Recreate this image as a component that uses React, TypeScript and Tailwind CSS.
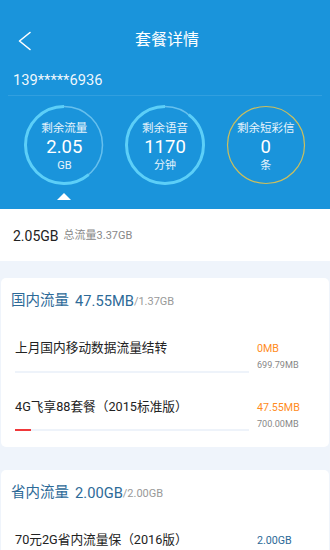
const font = { fontFamily: 'Roboto, "Noto Sans CJK SC", sans-serif' };

type Ring = {
    label: string;
    value: string;
    unit: string;
    start: number; // degrees from top, where the remaining arc begins
    sweep: number;
    color: string;
    track: string;
    trackWidth: number;
};

const rings: Ring[] = [
    { label: '剩余流量', value: '2.05', unit: 'GB', start: 140, sweep: 220, color: '#5ccff8', track: '#66c0ee', trackWidth: 1.5 },
    { label: '剩余语音', value: '1170', unit: '分钟', start: 38, sweep: 322, color: '#5ccff8', track: '#66c0ee', trackWidth: 1.5 },
    { label: '剩余短彩信', value: '0', unit: '条', start: 0, sweep: 0, color: '#5ccff8', track: '#cdbf5c', trackWidth: 1.2 },
];

function RingCircle({ ring }: { ring: Ring }) {
    const r = 38.5;
    const c = 2 * Math.PI * r;
    const arcLen = (ring.sweep / 360) * c;
    const startLen = (ring.start / 360) * c;

    return (
        <div className="relative w-[80px] h-[80px]">
            <svg width="80" height="80" viewBox="0 0 80 80" className="absolute inset-0">
                <circle cx="40" cy="40" r={r} fill="none" stroke={ring.track} strokeWidth={ring.trackWidth} />
                {ring.sweep > 0 && (
                    <circle
                        cx="40"
                        cy="40"
                        r={r}
                        fill="none"
                        stroke={ring.color}
                        strokeWidth="3"
                        strokeDasharray={`${arcLen} ${c}`}
                        strokeDashoffset={-startLen}
                        transform="rotate(-90 40 40)"
                    />
                )}
            </svg>
            <div className="absolute inset-0 flex flex-col items-center justify-center pt-[3px] text-white">
                <span className="text-[11.5px] leading-[14px] text-white/90">{ring.label}</span>
                <span className="text-[18.5px] leading-[24px]">{ring.value}</span>
                <span className="text-[11px] leading-[14px] text-white/90">{ring.unit}</span>
            </div>
        </div>
    );
}

type Item = {
    name: string;
    used: string;
    total?: string;
    usedColor: string;
    percent: number;
};

function ItemRow({ item }: { item: Item }) {
    return (
        <div className="flex pt-[13px] pl-[14px] pr-[10px] h-[58.5px]">
            <div className="flex-1 flex flex-col">
                <span className="text-[12.7px] leading-[22px] text-[#222]">{item.name}</span>
                {item.total && (
                    <div className="mt-[11.5px] h-[2px] bg-[#eef3fa] flex">
                        <div className="h-full bg-[#f0383a]" style={{ width: `${item.percent}%` }} />
                    </div>
                )}
            </div>
            <div className="w-[62px] ml-[8px] flex flex-col pt-[4px]">
                <span className="text-[10.7px] leading-[16px]" style={{ color: item.usedColor }}>
                    {item.used}
                </span>
                {item.total && <span className="text-[9.1px] leading-[16px] text-[#888]">{item.total}</span>}
            </div>
        </div>
    );
}

function UsageCard({ title, used, total, items }: { title: string; used: string; total: string; items: Item[] }) {
    return (
        <div className="mx-px bg-white rounded-[5px] pb-[6px]">
            <div className="h-[46px] flex items-center pl-[10px] text-[#2d6a98]">
                <span className="text-[14.5px]">{title}</span>
                <span className="text-[14.7px] ml-[6px]">{used}</span>
                <span className="text-[11px] text-[#999] mt-[2px]">/{total}</span>
            </div>
            {items.map((item) => (
                <ItemRow key={item.name} item={item} />
            ))}
        </div>
    );
}

export default function App() {
    return (
        <div className="w-[330px] h-[550px] bg-[#eff4fb] overflow-hidden" style={font}>
            <div className="bg-[#1a94db] pt-5 pb-[9px]">
                <div className="relative h-10 flex items-center justify-center">
                    {/* back arrow */}
                    <svg width="14" height="20" viewBox="0 0 14 20" className="absolute left-[18px] top-[11px]">
                        <polyline points="12,1.5 1.5,10 12,18.5" fill="none" stroke="white" strokeWidth="1.6" strokeLinecap="round" strokeLinejoin="round" />
                    </svg>
                    <span className="text-white text-[16px] ml-[4px]">套餐详情</span>
                </div>
                <div className="mt-[10px] px-[13px] text-[14.7px] leading-[20px] text-white/95">139*****6936</div>
                <div className="mt-[5px] mx-2 h-px bg-white/10" />
                <div className="mt-[9px] px-[14px] grid grid-cols-3">
                    {rings.map((ring) => (
                        <div key={ring.label} className="flex justify-center">
                            <RingCircle ring={ring} />
                        </div>
                    ))}
                </div>
                <div className="px-[14px] grid grid-cols-3 mt-2">
                    <div className="flex justify-center">
                        <div className="w-0 h-0 border-l-[7px] border-r-[7px] border-b-[7px] border-l-transparent border-r-transparent border-b-white" />
                    </div>
                </div>
            </div>

            <div className="bg-white h-[52px] flex items-center pl-[13px] pt-[2px]">
                <span className="text-[14px] text-[#222]">2.05GB</span>
                <span className="text-[11px] text-[#888] ml-[5px] mt-[1px]">总流量3.37GB</span>
            </div>

            <div className="mt-[17px]">
                <UsageCard
                    title="国内流量"
                    used="47.55MB"
                    total="1.37GB"
                    items={[
                        { name: '上月国内移动数据流量结转', used: '0MB', total: '699.79MB', usedColor: '#ff8c1e', percent: 0 },
                        { name: '4G飞享88套餐（2015标准版）', used: '47.55MB', total: '700.00MB', usedColor: '#ff8c1e', percent: 7 },
                    ]}
                />
            </div>

            <div className="mt-[23px]">
                <UsageCard
                    title="省内流量"
                    used="2.00GB"
                    total="2.00GB"
                    items={[{ name: '70元2G省内流量保（2016版）', used: '2.00GB', usedColor: '#2d6a98', percent: 100 }]}
                />
            </div>
        </div>
    );
}
